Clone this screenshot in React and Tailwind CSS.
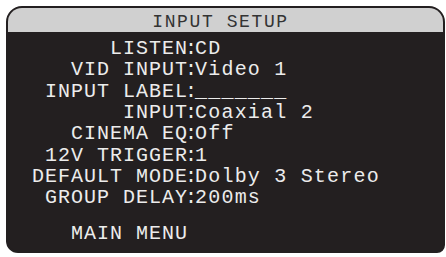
import React from "react";

const rows = [
  ["LISTEN", "CD"],
  ["VID INPUT", "Video 1"],
  ["INPUT LABEL", "_______"],
  ["INPUT", "Coaxial 2"],
  ["CINEMA EQ", "Off"],
  ["12V TRIGGER", "1"],
  ["DEFAULT MODE", "Dolby 3 Stereo"],
  ["GROUP DELAY", "200ms"],
];

export default function App() {
  return (
    <div className="w-[446px] h-[257px] bg-white pt-[6px] pl-[6px]">
      <div
        className="w-[439px] h-[247px] border-2 border-[#231f20] bg-[#231f20] rounded-tl-[16px] rounded-tr-[16px] rounded-bl-[12px] rounded-br-[8px] overflow-hidden flex flex-col"
        style={{ fontFamily: '"Liberation Mono", "DejaVu Sans Mono", monospace' }}
      >
        <div className="h-[24px] shrink-0 bg-[#d0d0d0] flex justify-center pt-[2px] pr-[10px] text-[18px] leading-[24px] tracking-[1.6px] text-[#333333]">
          INPUT SETUP
        </div>
        <div className="flex-1 pt-[6px] pl-[24px] text-[20px] leading-[21.33px] text-[#ececec]">
          <div className="grid grid-cols-[auto_6px_1fr]">
            {rows.map(([label, value]) => (
              <React.Fragment key={label}>
                <span className="text-right whitespace-pre tracking-[1px]">{label}</span>
                <span className="flex justify-center">:</span>
                <span className="whitespace-pre pl-[1px] tracking-[1.2px]">{value}</span>
              </React.Fragment>
            ))}
          </div>
          <div className="mt-[14px] pl-[39px] whitespace-pre tracking-[1px]">MAIN MENU</div>
        </div>
      </div>
    </div>
  );
}
